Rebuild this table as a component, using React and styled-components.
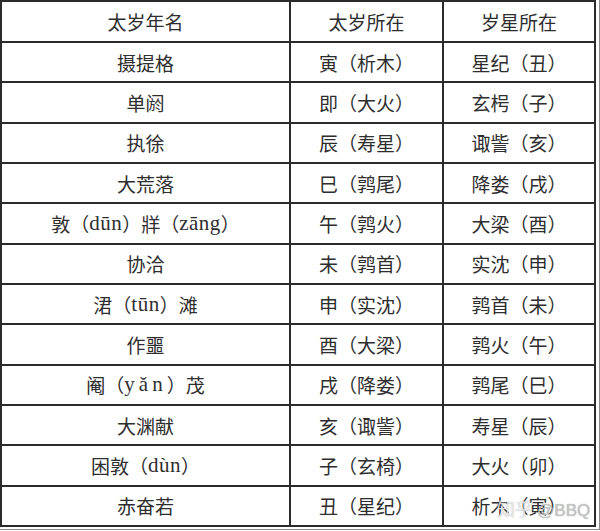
import styled, { createGlobalStyle } from "styled-components";

const GlobalStyle = createGlobalStyle`
  html, body {
    margin: 0;
    padding: 0;
    background: #ffffff;
  }
`;

const rows = [
  ["摄提格", "寅（析木）", "星纪（丑）"],
  ["单阏", "即（大火）", "玄枵（子）"],
  ["执徐", "辰（寿星）", "诹訾（亥）"],
  ["大荒落", "巳（鹑尾）", "降娄（戌）"],
  [["敦（", "dūn", "）牂（", "zāng", "）"], "午（鹑火）", "大梁（酉）"],
  ["协洽", "未（鹑首）", "实沈（申）"],
  [["涒（", "tūn", "）滩"], "申（实沈）", "鹑首（未）"],
  ["作噩", "酉（大梁）", "鹑火（午）"],
  [["阉（", "yǎn", "）茂"], "戌（降娄）", "鹑尾（巳）"],
  ["大渊献", "亥（诹訾）", "寿星（辰）"],
  [["困敦（", "dùn", "）"], "子（玄椅）", "大火（卯）"],
  ["赤奋若", "丑（星纪）", "析木（寅）"],
];

export default function App() {
  return (
    <>
      <GlobalStyle />
      <Frame>
        <Table>
          <Cell>太岁年名</Cell>
          <Cell>太岁所在</Cell>
          <Cell>岁星所在</Cell>
          {rows.map((row, i) =>
            row.map((value, j) => (
              <Cell key={i + "-" + j}>
                {Array.isArray(value)
                  ? value.map((part, k) =>
                      k % 2 === 1 ? (
                        <Pinyin key={k} $spaced={part === "yǎn"}>
                          {part}
                        </Pinyin>
                      ) : (
                        <span key={k}>{part}</span>
                      )
                    )
                  : value}
              </Cell>
            ))
          )}
        </Table>
        <Watermark>
          知乎 <At>@BBQ</At>
        </Watermark>
      </Frame>
    </>
  );
}

const Frame = styled.div`
  position: relative;
  width: 596px;
  padding: 0 3px 2px 0;
  border-right: 1px solid #8a8a8a;
  border-bottom: 1px solid #8a8a8a;
`;

const Table = styled.div`
  display: grid;
  grid-template-columns: 287px 151px 150px;
  grid-template-rows: 39px repeat(12, 38.33px);
  gap: 2px;
  padding: 2px;
  background: #2b2b2b;
`;

const Cell = styled.div`
  background: #ffffff;
  display: flex;
  align-items: center;
  justify-content: center;
  font-family: "Noto Sans CJK SC", sans-serif;
  font-size: 19px;
  color: #2e2e2e;
  white-space: nowrap;
  line-height: 1;
`;

const Pinyin = styled.span`
  font-family: "Liberation Serif", serif;
  font-size: 21px;
  letter-spacing: ${(p) => (p.$spaced ? "4px" : "0.5px")};
`;

const Watermark = styled.div`
  position: absolute;
  left: 497px;
  top: 495px;
  font-family: "Noto Sans CJK SC", sans-serif;
  font-size: 18px;
  color: rgba(255, 255, 255, 0.75);
  text-shadow: 0 0 1px rgba(90, 90, 90, 0.6);
  white-space: nowrap;
`;

const At = styled.span`
  font-family: "Liberation Sans", sans-serif;
  font-size: 17px;
  color: rgba(200, 200, 200, 0.9);
`;
